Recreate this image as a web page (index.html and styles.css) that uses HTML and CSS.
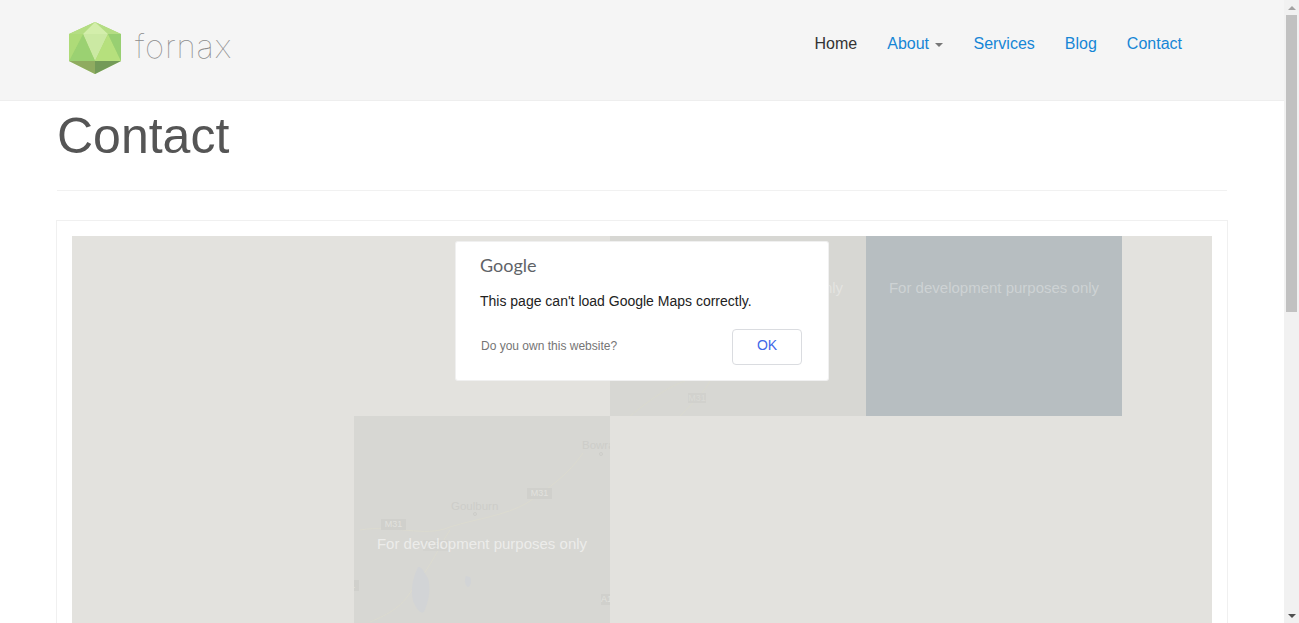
FILE: index.html
```html
<!DOCTYPE html>
<html lang="en">
<head>
<meta charset="utf-8">
<title>Contact</title>
<link rel="stylesheet" href="styles.css">
</head>
<body>
<div class="page">
  <header class="navbar">
    <div class="navbar-inner">
      <a class="brand" href="#">
        <svg class="logo" width="54" height="54" viewBox="0 0 54 54" aria-hidden="true">
          <polygon points="27,1 53,13 53,40 27,53 1,40 1,13" fill="#a9d672"/>
          <polygon points="27,1 53,13 40,13" fill="#b4dd83"/>
          <polygon points="27,1 1,13 15,13" fill="#b4dd83"/>
          <polygon points="27,1 40,13 15,13" fill="#d3eeab"/>
          <polygon points="15,13 40,13 27,40" fill="#cbe9a3"/>
          <polygon points="15,13 1,40 27,40" fill="#9bd172"/>
          <polygon points="40,13 53,40 27,40" fill="#b6e07d"/>
          <polygon points="40,13 53,13 53,40" fill="#98cf72"/>
          <polygon points="15,13 1,13 1,40" fill="#aedb78"/>
          <polygon points="1,40 27,40 27,53" fill="#8fab60"/>
          <polygon points="53,40 27,40 27,53" fill="#739a58"/>
        </svg>
        <span class="wordmark">fornax</span>
      </a>
      <nav class="nav">
        <a class="nav-link active" href="#">Home</a>
        <a class="nav-link" href="#">About <span class="caret"></span></a>
        <a class="nav-link" href="#">Services</a>
        <a class="nav-link" href="#">Blog</a>
        <a class="nav-link" href="#">Contact</a>
      </nav>
    </div>
  </header>
  <main class="container">
    <h1 class="title">Contact</h1>
    <div class="rule"></div>
    <section class="card">
      <div class="map">
        <div class="tile tile-grey tile-top">
          <svg class="roads" width="256" height="180" viewBox="0 0 256 180" aria-hidden="true">
            <path d="M20 180 C45 160 60 150 75 145 M70 180 C85 165 95 155 100 145" fill="none" stroke="#dadacf" stroke-width="1"/>
          </svg>
          <span class="dev">For development purposes only</span>
          <span class="shield shield-top">M31</span>
        </div>
        <div class="tile tile-blue">
          <span class="dev">For development purposes only</span>
        </div>
        <div class="tile tile-grey tile-bottom">
          <svg class="roads" width="256" height="210" viewBox="0 0 256 210" aria-hidden="true">
            <path d="M6 114 C40 108 70 122 96 111 C125 102 150 100 173 87 C195 72 215 58 229 37" fill="none" stroke="#dcdbd0" stroke-width="1"/>
            <path d="M16 206 C35 198 50 190 60 170 C78 150 85 130 96 114" fill="none" stroke="#dcdbd0" stroke-width="1"/>
            <path d="M64 151 C60 160 56 170 59 185 C62 192 66 198 70 196 C75 185 77 172 74 162 C71 158 68 150 64 151 Z" fill="#d2d4d6"/>
            <path d="M112 160 C110 164 111 170 114 171 C117 170 118 165 116 161 Z" fill="#d2d4d6"/>
          </svg>
          <span class="place place-goulburn">Goulburn</span>
          <span class="dot dot-goulburn"></span>
          <span class="place place-bowral">Bowral</span>
          <span class="dot dot-bowral"></span>
          <span class="shield shield-a">M31</span>
          <span class="shield shield-b">M31</span>
          <span class="shield shield-c">M31</span>
          <span class="shield shield-d">M31</span>
          <span class="shield shield-e">A1</span>
          <span class="dev">For development purposes only</span>
        </div>
        <div class="dialog">
          <div class="dialog-logo">Google</div>
          <p class="dialog-msg">This page can't load Google Maps correctly.</p>
          <div class="dialog-foot">
            <a class="dialog-own" href="#">Do you own this website?</a>
            <button class="dialog-ok" type="button">OK</button>
          </div>
        </div>
      </div>
    </section>
  </main>
</div>
<div class="scrollbar" aria-hidden="true">
  <span class="sb-arrow sb-up"></span>
  <span class="sb-track"><span class="sb-thumb"></span></span>
  <span class="sb-arrow sb-down"></span>
</div>
</body>
</html>
```
FILE: styles.css
```css
* { box-sizing: border-box; }
html, body { margin: 0; height: 100%; overflow: hidden; }
body { font-family: "Liberation Sans", Arial, sans-serif; font-size: 14px; color: #555; background: #fff; }
a { text-decoration: none; }
.page { width: 1284px; height: 623px; overflow: hidden; }
.navbar { height: 101px; background: #f5f5f5; border-bottom: 1px solid #eee; }
.navbar-inner { width: 1170px; margin: 0 auto; padding-right: 30px; display: flex; justify-content: space-between; }
.brand { display: flex; align-items: flex-start; padding: 21px 0 0 11px; }
.logo { display: block; }
.wordmark { font-family: "Inter", "Liberation Sans", sans-serif; font-weight: 100; font-size: 33px; line-height: 50px; color: #8c8c8c; margin-left: 13px; letter-spacing: .8px; }
.nav { display: flex; padding-top: 34px; }
.nav-link { font-size: 16px; line-height: 20px; color: #1686d6; padding: 0 15px; }
.nav-link.active { color: #333; }
.caret { display: inline-block; width: 0; height: 0; margin-left: 2px; vertical-align: middle; border-top: 4px solid #777; border-left: 4px solid transparent; border-right: 4px solid transparent; }
.container { width: 1170px; margin: 0 auto; }
.title { font-size: 50px; font-weight: 400; line-height: 55px; color: #555; margin: 8px 0 0; }
.rule { height: 1px; background: #f1f1f1; margin-top: 26px; }
.card { margin: 29px -1px 0; border: 1px solid #f0f0f0; padding: 15px; }
.map { position: relative; height: 500px; background: #e3e2de; overflow: hidden; }
.tile { position: absolute; width: 256px; overflow: hidden; }
.tile-grey { background: #d7d7d3; }
.tile-blue { left: 794px; top: 0; height: 180px; background: #b7bec1; }
.tile-top { left: 538px; top: 0; height: 180px; }
.tile-bottom { left: 282px; top: 180px; height: 256px; }
.dev { position: absolute; left: 0; right: 0; text-align: center; font-size: 15px; line-height: 18px; color: rgba(255,255,255,.32); white-space: nowrap; }
.tile-top .dev, .tile-blue .dev { top: 43px; }
.tile-bottom .dev { top: 119px; color: rgba(255,255,255,.55); }
.roads { position: absolute; left: 0; top: 0; }
.place { position: absolute; font-size: 11.5px; line-height: 14px; color: #cdcdc9; white-space: nowrap; }
.place-goulburn { left: 97px; top: 83px; }
.place-bowral { left: 228px; top: 22px; }
.dot { position: absolute; width: 4px; height: 4px; border: 1px solid #cdcdc9; border-radius: 50%; }
.dot-goulburn { left: 119px; top: 96px; }
.dot-bowral { left: 245px; top: 36px; }
.shield { position: absolute; width: 25px; height: 11px; font-size: 9px; line-height: 11px; text-align: center; background: #d0d0cc; color: #e2e2de; overflow: hidden; }
.shield-a { left: 173px; top: 72px; }
.shield-b { left: 27px; top: 103px; }
.shield-c { left: 69px; top: 124px; background: #d3d3cf; color: #dcdcd8; }
.shield-d { left: -20px; top: 164px; }
.shield-e { left: 247px; top: 178px; text-align: left; }
.shield-top { left: 78px; top: 157px; width: 18px; height: 10px; line-height: 10px; background: #d1d1cd; color: #dadad6; }
.dialog { position: absolute; left: 383px; top: 5px; width: 374px; height: 140px; background: #fff; border-radius: 3px; box-shadow: inset 0 0 0 1px rgba(0,0,0,.06); padding: 14px 26px 0 25px; }
.dialog-logo { font-family: Lato, "Liberation Sans", sans-serif; font-size: 18px; line-height: 20px; color: #5f6368; }
.dialog-msg { margin: 16px 0 0; font-size: 14px; line-height: 20px; color: #222; }
.dialog-foot { display: flex; justify-content: space-between; align-items: center; margin-top: 18px; padding-right: 1px; }
.dialog-own { font-size: 12px; color: #757575; padding-left: 1px; position: relative; top: -1px; }
.dialog-ok { width: 70px; height: 36px; background: #fff; border: 1px solid #dadce0; border-radius: 4px; font-family: "Liberation Sans", sans-serif; font-size: 14px; color: #4168e8; padding: 0 0 4px; }
.scrollbar { position: fixed; right: 0; top: 0; width: 15px; height: 623px; background: #f1f1f1; display: flex; flex-direction: column; }
.sb-arrow { height: 15px; flex: none; display: flex; align-items: center; justify-content: center; }
.sb-up::before { content: ""; border-bottom: 4px solid #a3a3a3; border-left: 4px solid transparent; border-right: 4px solid transparent; }
.sb-down::before { content: ""; border-top: 4px solid #505050; border-left: 4px solid transparent; border-right: 4px solid transparent; }
.sb-track { flex: 1; padding: 0 2px; }
.sb-thumb { display: block; height: 297px; background: #c1c1c1; }
```
